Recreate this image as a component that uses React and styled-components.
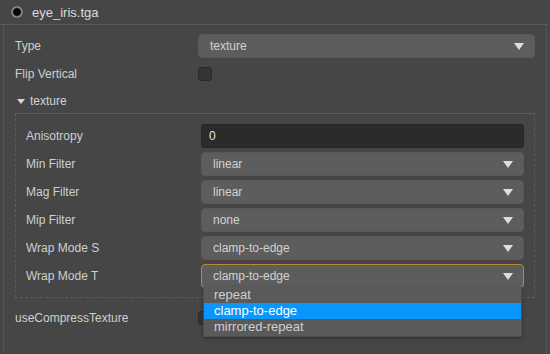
import React from 'react'
import styled, { createGlobalStyle } from 'styled-components'

const Global = createGlobalStyle`
  html, body {
    margin: 0;
    background: #464646;
    font-family: "Liberation Sans", Arial, sans-serif;
    font-size: 12px;
    color: #cfcfcf;
  }
`

const Page = styled.div`
  width: 550px;
  height: 354px;
  overflow: hidden;
  background: #464646;
`

const Header = styled.div`
  height: 24px;
  display: flex;
  align-items: center;
  gap: 9px;
  padding-left: 11px;
  border-bottom: 1px solid #5a5a5a;
  width: 537px;
  font-size: 13px;
  color: #dcdcdc;
`

const Dot = styled.span`
  width: 12px;
  height: 12px;
  border-radius: 50%;
  background: radial-gradient(circle, #050505 0 3px, #1c1c1c 3.5px, #9a9a9a 5px, #6a6a6a 6px);
`

const Body = styled.div`
  margin-left: 3px;
  width: 544px;
  height: 329px;
  border-left: 1px solid #555;
  border-right: 1px solid #555;
  padding: 9px 0 0 11px;
  box-sizing: border-box;
  display: flex;
  flex-direction: column;
  gap: 4px;
`

const Row = styled.div`
  display: grid;
  grid-template-columns: ${({ labelWidth }) => labelWidth}px 1fr;
  align-items: center;
  height: 24px;
  width: ${({ width }) => width}px;
`

const Label = styled.div`
  color: #cfcfcf;
  white-space: nowrap;
`

const SelectBox = styled.div`
  position: relative;
  height: 24px;
  box-sizing: border-box;
  display: flex;
  align-items: center;
  justify-content: space-between;
  padding: 0 10px 0 11px;
  background: #5d5d5d;
  border: 1px solid ${({ focused }) => (focused ? '#b8873e' : '#585858')};
  border-radius: 4px;
  color: #d2d2d2;
`

const Arrow = styled.span`
  width: 0;
  height: 0;
  border-left: 5px solid transparent;
  border-right: 5px solid transparent;
  border-top: 7px solid #dedede;
  margin-top: 1px;
`

const Input = styled.div`
  height: 24px;
  box-sizing: border-box;
  display: flex;
  align-items: center;
  padding-left: 7px;
  background: #2c2b2c;
  border: 1px solid #262526;
  border-radius: 3px;
  color: #e0e0e0;
`

const Check = styled.div`
  width: 14px;
  height: 14px;
  box-sizing: border-box;
  background: #353535;
  border: 1px solid #2a2a2a;
  border-radius: 3px;
`

const Fold = styled.div`
  height: 22px;
  display: flex;
  align-items: center;
  gap: 5px;
  padding-left: 2px;
  color: #d2d2d2;
`

const FoldArrow = styled.span`
  width: 0;
  height: 0;
  border-left: 4px solid transparent;
  border-right: 4px solid transparent;
  border-top: 5px solid #d8d8d8;
`

const Group = styled.div`
  width: 520px;
  box-sizing: border-box;
  margin-top: -3px;
  padding: 10px 10px 9px 10px;
  border-top: 1px solid #5b5b5b;
  border-left: 1px dashed #5a5a5a;
  border-right: 1px dashed #5a5a5a;
  border-bottom: 1px dashed #5a5a5a;
  display: flex;
  flex-direction: column;
  gap: 4px;
`

const List = styled.div`
  position: absolute;
  z-index: 2;
  top: 100%;
  left: 1px;
  right: 1px;
  background: #5a5a5a;
  border: 1px solid #4e4e4e;
  border-top: none;
  box-shadow: 0 1px 3px rgba(0, 0, 0, 0.35);
  padding-bottom: 1px;
`

const Option = styled.div`
  height: 16px;
  line-height: 16px;
  padding-left: 10px;
  font-size: 13px;
  color: ${({ active }) => (active ? '#ffffff' : '#d0d0d0')};
  background: ${({ active }) => (active ? '#0a96fb' : 'transparent')};
`

const GapRow = styled.div`
  margin-top: 4px;
`

function Select({ value, focused, options, active }) {
  return (
    <SelectBox focused={focused}>
      <span>{value}</span>
      <Arrow />
      {options && (
        <List>
          {options.map((o) => (
            <Option key={o} active={o === active}>{o}</Option>
          ))}
        </List>
      )}
    </SelectBox>
  )
}

export default function App() {
  const inner = [
    ['Min Filter', 'linear'],
    ['Mag Filter', 'linear'],
    ['Mip Filter', 'none'],
    ['Wrap Mode S', 'clamp-to-edge'],
  ]
  return (
    <Page>
      <Global />
      <Header>
        <Dot />
        <span>eye_iris.tga</span>
      </Header>
      <Body>
        <Row labelWidth={183} width={520}>
          <Label>Type</Label>
          <Select value="texture" />
        </Row>
        <Row labelWidth={183} width={520}>
          <Label>Flip Vertical</Label>
          <Check />
        </Row>
        <Fold>
          <FoldArrow />
          <span>texture</span>
        </Fold>
        <Group>
          <Row labelWidth={175} width={498}>
            <Label>Anisotropy</Label>
            <Input>0</Input>
          </Row>
          {inner.map(([l, v]) => (
            <Row key={l} labelWidth={175} width={498}>
              <Label>{l}</Label>
              <Select value={v} />
            </Row>
          ))}
          <Row labelWidth={175} width={498}>
            <Label>Wrap Mode T</Label>
            <Select
              value="clamp-to-edge"
              focused
              options={['repeat', 'clamp-to-edge', 'mirrored-repeat']}
              active="clamp-to-edge"
            />
          </Row>
        </Group>
        <GapRow>
          <Row labelWidth={183} width={520}>
            <Label>useCompressTexture</Label>
            <Check />
          </Row>
        </GapRow>
      </Body>
    </Page>
  )
}
